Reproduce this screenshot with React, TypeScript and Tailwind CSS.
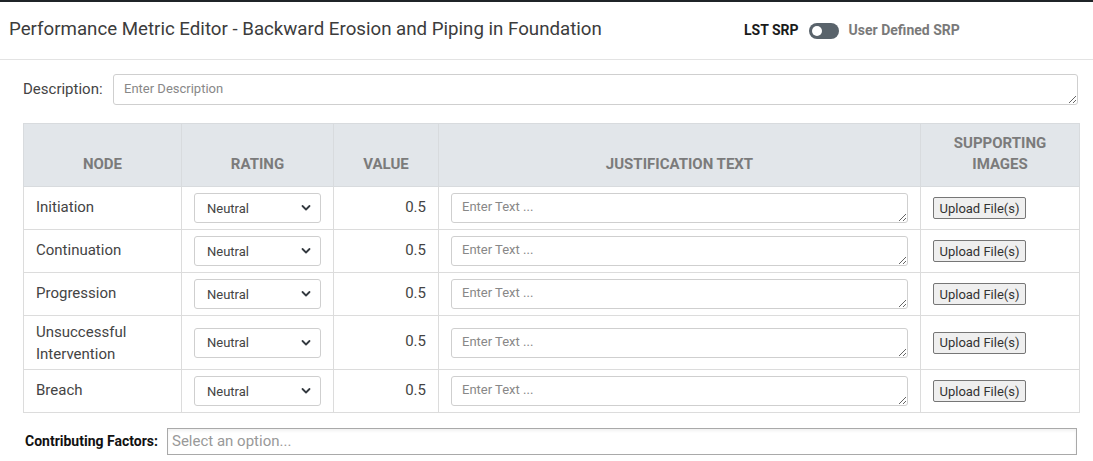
import React from "react";

const rows: { name: string; tall?: boolean }[] = [
  { name: "Initiation" },
  { name: "Continuation" },
  { name: "Progression" },
  { name: "Unsuccessful Intervention", tall: true },
  { name: "Breach" },
];

function Chevron() {
  return (
    <svg width="10" height="7" viewBox="0 0 10 7" className="pointer-events-none absolute right-[10px] top-1/2 -translate-y-1/2">
      <path d="M1.5 1.5 L5 5 L8.5 1.5" fill="none" stroke="#343a40" strokeWidth="1.8" strokeLinecap="round" strokeLinejoin="round" />
    </svg>
  );
}

export default function App() {
  return (
    <div className="w-[1093px] h-[461px] overflow-hidden bg-white border-t-2 border-[#1f2428] font-['Roboto',sans-serif] text-[#444]">
      <div className="flex items-center h-[58px] border-b border-[#e3e3e3] pl-[9px]">
        <div className="w-[735px] text-[18.7px] text-[#3c3c3c] leading-none -mt-[3px]">
          Performance Metric Editor - Backward Erosion and Piping in Foundation
        </div>
        <div className="flex items-center">
          <span className="text-[14px] font-bold text-[#1a1a1a]">LST SRP</span>
          <div className="ml-[10px] w-[30px] h-[16px] rounded-full bg-[#59636b] relative">
            <div className="absolute left-[3px] top-[3px] w-[10px] h-[10px] rounded-full bg-white" />
          </div>
          <span className="ml-[10px] text-[14px] font-bold text-[#7a7a7a]">User Defined SRP</span>
        </div>
      </div>

      <div className="pl-[23px] pr-[14px] pt-[14px]">
        <div className="flex items-start">
          <label className="text-[15px] text-[#444] w-[90px] pt-[4px]">Description:</label>
          <textarea
            rows={1}
            placeholder="Enter Description"
            className="flex-1 h-[31px] mr-[1px] border border-[#cfcfcf] rounded-[3px] px-[10px] py-[5px] text-[13px] leading-[18px] text-[#444] placeholder:text-[#888] outline-none resize-y"
          />
        </div>

        <table className="mt-[18px] w-[1056px] border-collapse table-fixed text-[15px]">
          <colgroup>
            <col className="w-[158px]" />
            <col className="w-[152px]" />
            <col className="w-[105px]" />
            <col className="w-[482px]" />
            <col className="w-[159px]" />
          </colgroup>
          <thead>
            <tr className="bg-[#e2e6ea] h-[63px]">
              {["NODE", "RATING", "VALUE", "JUSTIFICATION TEXT", "SUPPORTING IMAGES"].map((h, i) => (
                <th
                  key={h}
                  className={`border border-[#d8dbde] align-bottom text-center font-bold text-[15px] leading-[21px] text-[#7b7b7b] pb-[11px] pt-[8px] ${i === 4 ? "px-[24px]" : "px-3"}`}
                >
                  {h}
                </th>
              ))}
            </tr>
          </thead>
          <tbody>
            {rows.map((r) => (
              <tr key={r.name} className={r.tall ? "h-[54px]" : "h-[43px]"}>
                <td className="border border-[#dcdcdc] px-3 align-middle leading-[22px] text-[#444]">
                  <div className={r.tall ? "" : "-mt-[2px]"}>{r.name}</div>
                </td>
                <td className="border border-[#dcdcdc] px-3 align-middle">
                  <div className="relative">
                    <select className="w-full h-[30px] appearance-none border border-[#cfcfcf] rounded-[3px] bg-white pl-[12px] pt-[1px] text-[13px] text-[#444] outline-none">
                      <option>Neutral</option>
                    </select>
                    <Chevron />
                  </div>
                </td>
                <td className="border border-[#dcdcdc] px-3 align-middle text-right text-[#444]">
                  <div className="-mt-[2px]">0.5</div>
                </td>
                <td className="border border-[#dcdcdc] px-3 align-middle">
                  <textarea
                    rows={1}
                    placeholder="Enter Text ..."
                    className="block w-full h-[30px] border border-[#cfcfcf] rounded-[3px] px-[10px] py-[4px] text-[13px] leading-[18px] placeholder:text-[#888] outline-none resize-y"
                  />
                </td>
                <td className="border border-[#dcdcdc] px-3 align-middle">
                  <button className="h-[22px] w-[93px] border border-[#767676] rounded-[2px] bg-[#efefef] text-[13px] text-[#333] leading-none">
                    Upload File(s)
                  </button>
                </td>
              </tr>
            ))}
          </tbody>
        </table>

        <div className="flex items-center mt-[15px]">
          <label className="w-[144px] pl-[2px] text-[14px] font-bold text-[#111] whitespace-nowrap">Contributing Factors:</label>
          <div className="flex-1 h-[27px] mr-[2px] border border-[#a9a9a9] flex items-center px-[4px] text-[15px] text-[#999] shadow-[inset_0_2px_3px_rgba(0,0,0,0.06)]">
            Select an option...
          </div>
        </div>
      </div>
    </div>
  );
}
